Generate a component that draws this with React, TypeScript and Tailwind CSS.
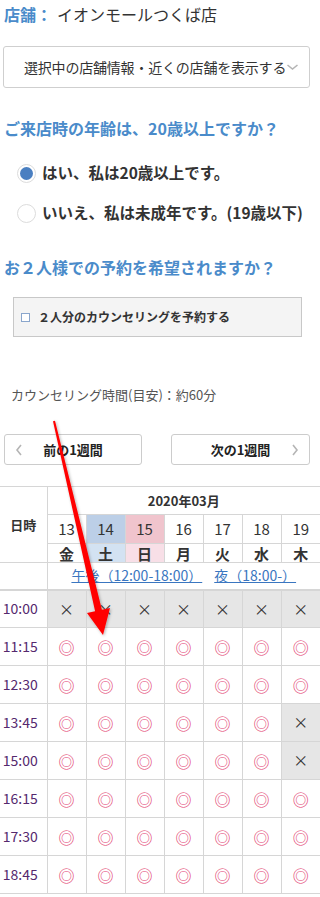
import React from 'react';

const days = [
  { d: '13', w: '金', dateBg: '', wBg: '' },
  { d: '14', w: '土', dateBg: 'bg-[#bccfe7]', wBg: 'bg-[#d3e2f2]' },
  { d: '15', w: '日', dateBg: 'bg-[#f0c4cd]', wBg: 'bg-[#f8dfe7]' },
  { d: '16', w: '月', dateBg: '', wBg: '' },
  { d: '17', w: '火', dateBg: '', wBg: '' },
  { d: '18', w: '水', dateBg: '', wBg: '' },
  { d: '19', w: '木', dateBg: '', wBg: '' },
];

// true = available (◎), false = full (×)
const slots: { time: string; open: boolean[] }[] = [
  { time: '10:00', open: [false, false, false, false, false, false, false] },
  { time: '11:15', open: [true, true, true, true, true, true, true] },
  { time: '12:30', open: [true, true, true, true, true, true, true] },
  { time: '13:45', open: [true, true, true, true, true, true, false] },
  { time: '15:00', open: [true, true, true, true, true, true, false] },
  { time: '16:15', open: [true, true, true, true, true, true, true] },
  { time: '17:30', open: [true, true, true, true, true, true, true] },
  { time: '18:45', open: [true, true, true, true, true, true, true] },
];

const Chevron = ({ dir }: { dir: 'left' | 'right' | 'down' }) => {
  const d = dir === 'left' ? 'M6 1 L2 6 L6 11' : dir === 'right' ? 'M2 1 L6 6 L2 11' : 'M1 2 L6 6 L11 2';
  const vb = dir === 'down' ? '0 0 12 8' : '0 0 8 12';
  return (
    <svg viewBox={vb} className={dir === 'down' ? 'w-[13px] h-[8px]' : 'w-[8px] h-[12px]'} fill="none" stroke="#b5b5b5" strokeWidth="1.6">
      <path d={d} />
    </svg>
  );
};

export default function App() {
  return (
    <div className="relative w-[320px] h-[897px] overflow-hidden bg-white text-[#333] font-['Noto_Sans_CJK_JP','Noto_Sans',sans-serif]">
      {/* Store */}
      <p className="pl-1 pt-[2px] text-[16px] leading-[24px] whitespace-nowrap">
        <span className="font-bold text-[#4a8bca]">店舗：</span>
        <span className="ml-[5px]">イオンモールつくば店</span>
      </p>

      {/* Store selector */}
      <div className="mt-[20px] ml-[3px] w-[307px] h-[42px] border border-[#cfcfcf] rounded-[3px] flex items-center pl-[20px] pr-[6px]">
        <span className="text-[14px] whitespace-nowrap tracking-[-0.2px]">選択中の店舗情報・近くの店舗を表示する</span>
        <Chevron dir="down" />
      </div>

      {/* Age question */}
      <h2 className="mt-[28px] pl-1 text-[16px] leading-[24px] font-bold text-[#4a8bca]">ご来店時の年齢は、20歳以上ですか？</h2>
      <div className="mt-[13px] pl-[17px]">
        <label className="h-[40px] flex items-center gap-[6px] whitespace-nowrap">
          <span className="w-[19px] h-[19px] rounded-full border border-[#dcdcdc] flex items-center justify-center">
            <span className="w-[13px] h-[13px] rounded-full bg-[#4a7fc1]" />
          </span>
          <span className="text-[15.5px] font-bold">はい、私は20歳以上です。</span>
        </label>
        <label className="h-[40px] flex items-center gap-[6px] whitespace-nowrap">
          <span className="w-[19px] h-[19px] rounded-full border border-[#dcdcdc]" />
          <span className="text-[15.5px] font-bold">いいえ、私は未成年です。(19歳以下)</span>
        </label>
      </div>

      {/* Pair booking */}
      <h2 className="mt-[22px] pl-1 text-[16px] leading-[24px] font-bold text-[#4a8bca]">お２人様での予約を希望されますか？</h2>
      <div className="mt-[18px] ml-[13px] w-[289px] h-[40px] bg-[#f4f4f4] border border-[#c8c8c8] flex items-center pl-[7px] gap-[8px]">
        <span className="w-[9px] h-[9px] border border-[#8aa6cc] bg-white" />
        <span className="text-[12px] font-bold">２人分のカウンセリングを予約する</span>
      </div>

      <p className="mt-[48px] pl-[11px] text-[13px] leading-[20px] text-[#555]">カウンセリング時間(目安)：約60分</p>

      {/* Week navigation */}
      <div className="mt-[29px] flex justify-between pl-[4px] pr-[10px]">
        <button className="w-[138px] h-[31px] border border-[#cccccc] rounded-[3px] bg-white flex items-center px-[10px]">
          <Chevron dir="left" />
          <span className="flex-1 text-center text-[13px] font-bold text-[#222] pr-[8px]">前の1週間</span>
        </button>
        <button className="w-[139px] h-[31px] border border-[#cccccc] rounded-[3px] bg-white flex items-center px-[10px]">
          <span className="flex-1 text-center text-[13px] font-bold text-[#222] pl-[8px]">次の1週間</span>
          <Chevron dir="right" />
        </button>
      </div>

      {/* Calendar */}
      <table className="mt-[21px] w-[320px] table-fixed border-collapse text-center">
        <colgroup>
          <col className="w-[47px]" />
          {days.map(d => <col key={d.d} className="w-[39px]" />)}
        </colgroup>
        <thead>
          <tr className="h-[28px]">
            <th rowSpan={3} className="border border-[#d6d6d6] border-l-0 text-[13px] font-bold">日時</th>
            <th colSpan={7} className="border border-[#d6d6d6] border-r-0 text-[13px] font-bold">2020年03月</th>
          </tr>
          <tr className="h-[29px]">
            {days.map(d => (
              <td key={d.d} className={`border border-[#d6d6d6] text-[15px] last:border-r-0 ${d.dateBg}`}>{d.d}</td>
            ))}
          </tr>
          <tr className="h-[19px]">
            {days.map(d => (
              <td key={d.d} className={`border border-[#d6d6d6] text-[15px] font-bold leading-[17px] last:border-r-0 ${d.wBg}`}>{d.w}</td>
            ))}
          </tr>
          <tr className="h-[27px] border-b-2 border-[#d0d0d0]">
            <td className="border border-[#d6d6d6] border-l-0 border-b-2" />
            <td colSpan={7} className="border border-[#d6d6d6] border-r-0 border-b-2">
              <div className="flex justify-center gap-[12px] text-[14px] text-[#3a76c0] whitespace-nowrap">
                <a className="underline">午後（12:00-18:00）</a>
                <a className="underline">夜（18:00-）</a>
              </div>
            </td>
          </tr>
        </thead>
        <tbody>
          {slots.map(s => (
            <tr key={s.time} className="h-[38px]">
              <td className="border border-[#d6d6d6] border-l-0 text-[14px] text-[#55296e] pr-[6px]">{s.time}</td>
              {s.open.map((o, i) => (
                <td key={i} className={`border border-[#d6d6d6] last:border-r-0 ${o ? 'text-[#e2376c] text-[16px]' : 'bg-[#e6e6e6] text-[#333] text-[15px]'}`}>
                  {o ? '◎' : '×'}
                </td>
              ))}
            </tr>
          ))}
        </tbody>
      </table>

      {/* Red annotation arrow */}
      <svg className="absolute left-0 top-0 w-[320px] h-[897px] pointer-events-none" viewBox="0 0 320 897">
        <defs>
          <filter id="sh" x="-50%" y="-50%" width="200%" height="200%">
            <feDropShadow dx="1" dy="1" stdDeviation="1.5" floodColor="#000" floodOpacity="0.3" />
          </filter>
        </defs>
        <polygon
          filter="url(#sh)"
          fill="#ff0000"
          points="53,421.2 55,420.8 101.9,609.7 110,608 103,635 87,613 95.1,611.3"
        />
      </svg>
    </div>
  );
}
